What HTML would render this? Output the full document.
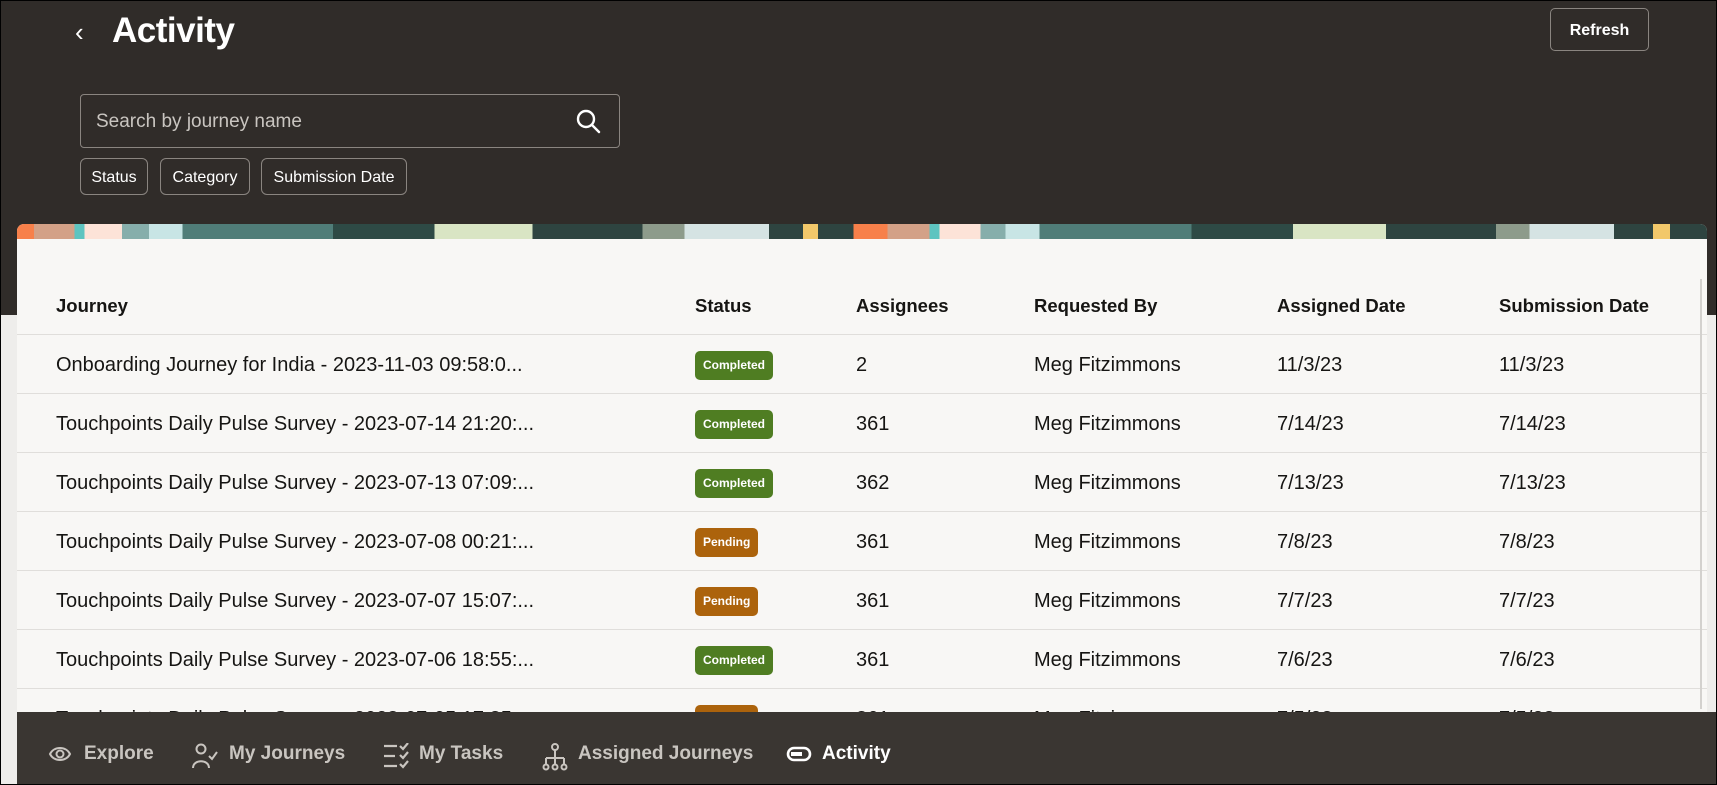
<!DOCTYPE html>
<html><head><meta charset="utf-8"><style>
*{box-sizing:border-box;margin:0;padding:0}
html,body{width:1717px;height:785px;overflow:hidden}
body{font-family:"Liberation Sans",sans-serif;background:#000;position:relative}
.frame{position:absolute;left:1px;top:1px;width:1715px;height:783px;background:#eeedeb;overflow:hidden}
.dark{position:absolute;left:0;top:0;width:1715px;height:314px;background:#302c29}
.back{position:absolute;left:74px;top:16px;color:#fff;font-size:26px}
.title{position:absolute;left:111px;top:10px;color:#fff;font-size:35px;font-weight:bold;letter-spacing:-0.5px}
.refresh{position:absolute;left:1549px;top:7px;width:99px;height:43px;border:1px solid #8a8580;border-radius:5px;color:#fff;font-weight:bold;font-size:16px;text-align:center;line-height:43px}
.search{position:absolute;left:79px;top:93px;width:540px;height:54px;border:1px solid #8a8580;border-radius:4px;color:#c9c5c0;font-size:19px;line-height:54px;padding-left:15px}
.search svg{position:absolute;right:18px;top:13px}
.chip{position:absolute;top:157px;height:37px;border:1px solid #8a8580;border-radius:6px;color:#fff;font-size:16px;line-height:37px;text-align:center}
.card{position:absolute;left:16px;top:223px;width:1690px;height:500px;background:#f8f7f5;border-radius:7px 7px 0 0;overflow:hidden}
.banner{height:15px;background:linear-gradient(90deg,#f7804a 0 1%,#d3a187 1% 3.4%,#5ec4c0 3.4% 4%,#fde3d8 4% 6.2%,#86aeab 6.2% 7.8%,#c8e5e5 7.8% 9.8%,#507d78 9.8% 18.7%,#2e4a45 18.7% 24.7%,#d9e5c4 24.7% 30.5%,#2e4440 30.5% 37%,#8d9b8b 37% 39.5%,#d5e3e3 39.5% 44.5%,#2e4440 44.5% 46.5%,#f2c86a 46.5% 47.4%,#2e4440 47.4% 49.5%,#f7804a 49.5% 51.5%,#d3a187 51.5% 54%,#5ec4c0 54% 54.6%,#fde3d8 54.6% 57%,#86aeab 57% 58.5%,#c8e5e5 58.5% 60.5%,#507d78 60.5% 69.5%,#2e4a45 69.5% 75.5%,#d9e5c4 75.5% 81%,#2e4440 81% 87.5%,#8d9b8b 87.5% 89.5%,#d5e3e3 89.5% 94.5%,#2e4440 94.5% 96.8%,#f2c86a 96.8% 97.8%,#2e4440 97.8%)}
.row{position:absolute;left:0;width:1690px;height:59px;border-bottom:1px solid #e0dedb;font-size:20px;color:#161513}
.row div{position:absolute;top:0;line-height:60px;white-space:nowrap}
.hdr{font-weight:bold;font-size:18.5px}
.badge{display:inline-block;height:29px;line-height:29px;border-radius:5px;color:#fff;font-size:12px;font-weight:bold;padding:0 8px;vertical-align:middle}
.g{background:#4f7d22}.p{background:#ac630c}
.c1{left:39px}.c2{left:678px}.c3{left:839px}.c4{left:1017px}.c5{left:1260px}.c6{left:1482px}
.nav{position:absolute;left:16px;top:711px;width:1699px;height:72px;background:#3a3632}
.ni{position:absolute;top:6px;line-height:72px;color:#c9c5c0;font-size:19px;font-weight:bold}
.ni svg{position:absolute;top:25px}
.scroll{position:absolute;left:1699px;top:278px;width:2px;height:430px;background:#d3d1ce}
</style></head><body><div class="frame">
<div class="dark"></div>
<div class="back">&#8249;</div>
<div class="title">Activity</div>
<div class="refresh">Refresh</div>
<div class="search">Search by journey name
<svg width="26" height="26" viewBox="0 0 26 26"><circle cx="11" cy="11" r="8" fill="none" stroke="#fff" stroke-width="2.4"/><line x1="17" y1="17" x2="24" y2="24" stroke="#fff" stroke-width="2.4" stroke-linecap="round"/></svg></div>
<div class="chip" style="left:79px;width:68px">Status</div>
<div class="chip" style="left:159px;width:90px">Category</div>
<div class="chip" style="left:260px;width:146px">Submission Date</div>
<div class="card"><div class="banner"></div>
<div class="row hdr" style="top:52px"><div class="c1">Journey</div><div class="c2">Status</div><div class="c3">Assignees</div><div class="c4">Requested By</div><div class="c5">Assigned Date</div><div class="c6">Submission Date</div></div>
<div class="row" style="top:111px"><div class="c1">Onboarding Journey for India - 2023-11-03 09:58:0...</div><div class="c2"><span class="badge g">Completed</span></div><div class="c3">2</div><div class="c4">Meg Fitzimmons</div><div class="c5">11/3/23</div><div class="c6">11/3/23</div></div>
<div class="row" style="top:170px"><div class="c1">Touchpoints Daily Pulse Survey - 2023-07-14 21:20:...</div><div class="c2"><span class="badge g">Completed</span></div><div class="c3">361</div><div class="c4">Meg Fitzimmons</div><div class="c5">7/14/23</div><div class="c6">7/14/23</div></div>
<div class="row" style="top:229px"><div class="c1">Touchpoints Daily Pulse Survey - 2023-07-13 07:09:...</div><div class="c2"><span class="badge g">Completed</span></div><div class="c3">362</div><div class="c4">Meg Fitzimmons</div><div class="c5">7/13/23</div><div class="c6">7/13/23</div></div>
<div class="row" style="top:288px"><div class="c1">Touchpoints Daily Pulse Survey - 2023-07-08 00:21:...</div><div class="c2"><span class="badge p">Pending</span></div><div class="c3">361</div><div class="c4">Meg Fitzimmons</div><div class="c5">7/8/23</div><div class="c6">7/8/23</div></div>
<div class="row" style="top:347px"><div class="c1">Touchpoints Daily Pulse Survey - 2023-07-07 15:07:...</div><div class="c2"><span class="badge p">Pending</span></div><div class="c3">361</div><div class="c4">Meg Fitzimmons</div><div class="c5">7/7/23</div><div class="c6">7/7/23</div></div>
<div class="row" style="top:406px"><div class="c1">Touchpoints Daily Pulse Survey - 2023-07-06 18:55:...</div><div class="c2"><span class="badge g">Completed</span></div><div class="c3">361</div><div class="c4">Meg Fitzimmons</div><div class="c5">7/6/23</div><div class="c6">7/6/23</div></div>
<div class="row" style="top:465px"><div class="c1">Touchpoints Daily Pulse Survey - 2023-07-05 17:35:...</div><div class="c2"><span class="badge p">Pending</span></div><div class="c3">361</div><div class="c4">Meg Fitzimmons</div><div class="c5">7/5/23</div><div class="c6">7/5/23</div></div>
</div>
<div class="scroll"></div>
<div class="nav">
<div class="ni" style="left:31px"><svg width="24" height="22" viewBox="0 0 24 22"><path d="M2 11 C6 3 18 3 22 11 C18 19 6 19 2 11Z" fill="none" stroke="#c9c5c0" stroke-width="2"/><circle cx="12" cy="11" r="3.5" fill="none" stroke="#c9c5c0" stroke-width="2"/></svg><span style="padding-left:36px">Explore</span></div>
<div class="ni" style="left:174px"><svg width="28" height="26" viewBox="0 0 28 26"><circle cx="10" cy="6" r="4.5" fill="none" stroke="#c9c5c0" stroke-width="2"/><path d="M2 25 C2 16 18 16 18 25" fill="none" stroke="#c9c5c0" stroke-width="2"/><path d="M18 13 L21 16 L26 9" fill="none" stroke="#c9c5c0" stroke-width="2"/></svg><span style="padding-left:38px">My Journeys</span></div>
<div class="ni" style="left:366px"><svg width="28" height="26" viewBox="0 0 28 26"><path d="M1 3H14M1 13H12M1 23H14M17 3l3 3 5-6M17 12l3 3 5-6M17 21l3 3 5-6" fill="none" stroke="#c9c5c0" stroke-width="2.2"/></svg><span style="padding-left:36px">My Tasks</span></div>
<div class="ni" style="left:525px"><svg width="26" height="28" viewBox="0 0 26 28"><circle cx="13" cy="4" r="3" fill="none" stroke="#c9c5c0" stroke-width="2"/><path d="M13 7V15M4 15H22M4 15V21M13 15V21M22 15V21" fill="none" stroke="#c9c5c0" stroke-width="2"/><circle cx="4" cy="24" r="2.5" fill="none" stroke="#c9c5c0" stroke-width="2"/><circle cx="13" cy="24" r="2.5" fill="none" stroke="#c9c5c0" stroke-width="2"/><circle cx="22" cy="24" r="2.5" fill="none" stroke="#c9c5c0" stroke-width="2"/></svg><span style="padding-left:36px">Assigned Journeys</span></div>
<div class="ni" style="left:769px;color:#fff"><svg width="26" height="22" viewBox="0 0 26 22" style="top:25px"><rect x="2" y="5" width="22" height="12" rx="6" fill="none" stroke="#fff" stroke-width="2.6"/><rect x="5" y="9" width="11" height="4" fill="#fff"/></svg><span style="padding-left:36px">Activity</span></div>
</div>
</div></body></html>
